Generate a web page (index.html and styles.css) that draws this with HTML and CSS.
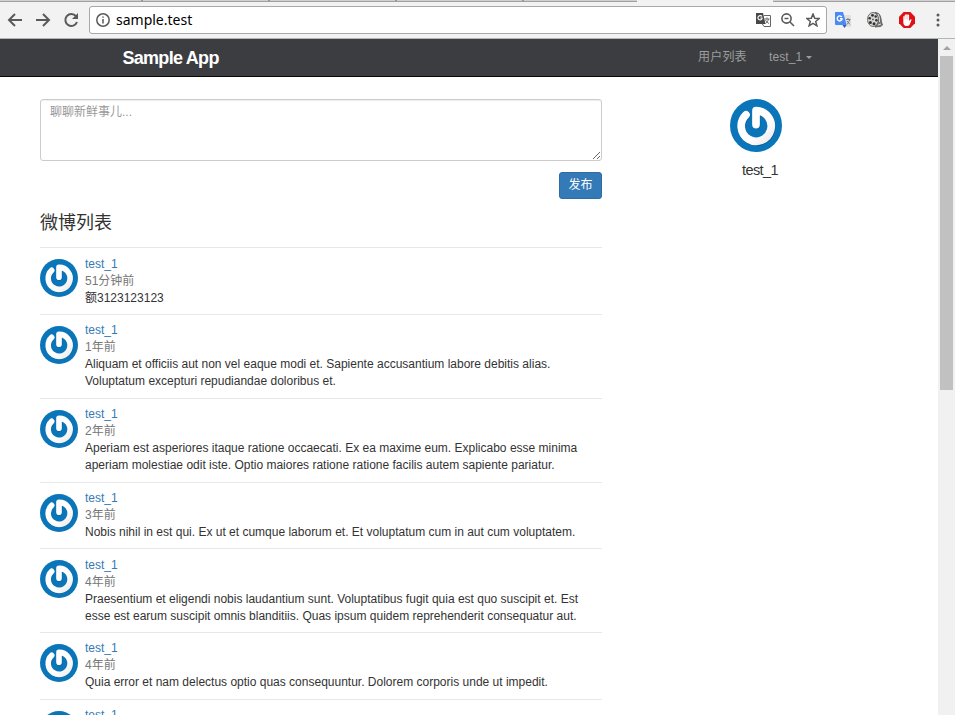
FILE: index.html
```html
<!DOCTYPE html>
<html lang="zh">
<head>
<meta charset="utf-8">
<title>Sample App</title>
<link rel="stylesheet" href="styles.css">
</head>
<body>
<svg class="defs" aria-hidden="true">
  <defs>
    <linearGradient id="shade" x1="0" y1="0" x2="1" y2="1">
      <stop offset=".6" stop-color="#fff"/><stop offset="1" stop-color="#ececec"/>
    </linearGradient>
    <symbol id="avatar" viewBox="0 0 52 52" preserveAspectRatio="none">
      <circle cx="26" cy="26" r="26" fill="#0a76b9"/>
      <path d="M16 15.500A15 15 0 1 0 26 11.500V25" transform="translate(.5 .7)" fill="none" stroke="#075582" stroke-opacity=".45" stroke-width="8" stroke-linecap="round" stroke-linejoin="round"/>
      <path d="M16 15.500A15 15 0 1 0 26 11.500V25" fill="none" stroke="url(#shade)" stroke-width="7.700" stroke-linecap="round" stroke-linejoin="round"/>
    </symbol>
  </defs>
</svg>
<header class="browser">
  <div class="tabs"><i class="tab-edge"></i><i class="tab-edge"></i><i class="tab-edge"></i><i class="tab-edge"></i><i class="tab-active"></i><i class="tab-rest"></i></div>
  <div class="toolbar">
    <svg class="nav-icon back" viewBox="0 0 16 16"><path d="M15 8H2M8 2L2 8l6 6"/></svg>
    <svg class="nav-icon forward" viewBox="0 0 16 16"><path d="M1 8h13M8 2l6 6-6 6"/></svg>
    <svg class="nav-icon reload" viewBox="0 0 16 16"><path d="M13 4.2A6 6 0 1 0 14 10"/><path class="solid" d="M15 1v6H9z"/></svg>
    <div class="address">
      <svg class="info" viewBox="0 0 14 14"><circle cx="7" cy="7" r="6.2"/><path d="M7 6v4.500M7 3.400v1.400"/></svg>
      <span class="url">sample.test</span>
      <svg class="translate-page" viewBox="0 0 15 14"><path fill="#484848" d="M0 0h7l2.500 11H0z"/><path fill="none" stroke="#666" d="M8 2.500h6.500v11H8l-2-3"/><path fill="none" stroke="#fff" stroke-width="1.200" d="M6 3.500A2.200 2.200 0 1 0 6 6V5H4.300"/><path fill="none" stroke="#666" d="M8.500 6h5M11 4.500V6M12.500 6c-.5 2-2 4-3 4.500M9.500 7c1 2 2.500 3 3.500 3.500"/></svg>
      <svg class="zoom-out" viewBox="0 0 14 14"><circle cx="5.500" cy="5.500" r="4.600"/><path d="M9 9l4 4M3.500 5.500h4"/></svg>
      <svg class="star" viewBox="0 0 14 14"><path d="M7 1l1.700 4.200 4.500.3-3.500 2.900 1.200 4.400L7 10.400l-3.900 2.400 1.200-4.400L.8 5.500l4.500-.3z"/></svg>
    </div>
    <svg class="ext translate-ext" viewBox="0 0 16 16"><path fill="#dfe0e1" d="M7 3h9v12H9z"/><path fill="#4a8af4" d="M0 0h8l3.700 13H1a1 1 0 0 1-1-1z"/><path fill="#3159b9" d="M7.500 13h4L9.500 16z"/><path fill="none" stroke="#fff" stroke-width="1.400" d="M6.800 5A2.500 2.500 0 1 0 7 7.500V6.800H5"/><path fill="none" stroke="#777c80" d="M11 7.500h4.500M13 6v1.500M14.500 8c-.5 2-1.500 3.500-2.700 4.500M12 9l3 3.500"/></svg>
    <svg class="ext reel" viewBox="0 0 16 16"><path fill="#777" stroke="#444" stroke-width=".7" d="M8 .5q5 0 6 6 .3 4 1.500 6.500l-2 1.500L8 15z"/><ellipse cx="6" cy="7.500" rx="5.500" ry="7" fill="#d4d4d2" stroke="#555" stroke-width=".8"/><g fill="#333"><circle cx="5.500" cy="3.300" r="1.400"/><circle cx="2.700" cy="6.300" r="1.300"/><circle cx="3.400" cy="10.500" r="1.500"/><circle cx="7" cy="11.800" r="1.500"/><circle cx="9.400" cy="8.300" r="1.300"/><circle cx="8.700" cy="4.500" r="1.200"/><circle cx="5.900" cy="7.500" r=".8"/></g><path fill="none" stroke="#ddd" d="M11 2q2 3 1.500 8M11 13l3-1"/></svg>
    <svg class="ext blocker" viewBox="0 0 16 16"><path fill="#df1115" d="M4.700 0h6.600L16 4.700v6.600L11.300 16H4.700L0 11.300V4.700z"/><path fill="#fff" d="M4.300 8V4.500q.6-.8 1.400 0V3q.7-.9 1.500-.2.700-1.200 1.500 0 .8-.7 1.400.3V9l1.300-1.500q1-.4 1.200.3L10.700 12.500Q10 14 7.500 14 4.300 14 4.300 10z"/><path fill="none" stroke="#e98a8c" stroke-width=".4" d="M5.700 4.500V7.500M7.200 3V7.500M8.700 3V7.500"/></svg>
    <svg class="menu" viewBox="0 0 4 14"><circle cx="2" cy="2" r="1.500"/><circle cx="2" cy="7" r="1.500"/><circle cx="2" cy="12" r="1.500"/></svg>
  </div>
</header>
<div class="viewport">
  <div class="page">
    <nav class="navbar">
      <a class="logo">Sample App</a>
      <a class="users">用户列表</a>
      <a class="account">test_1<i class="caret"></i></a>
    </nav>
    <div class="columns">
      <main>
        <textarea placeholder="聊聊新鲜事儿..."></textarea>
        <div class="actions"><button>发布</button></div>
        <h3>微博列表</h3>
        <ol class="statuses">
          <li class="low"><svg class="avatar"><use href="#avatar"/></svg><div><a>test_1</a><time>51分钟前</time><p>额3123123123</p></div></li>
          <li class="tall"><svg class="avatar"><use href="#avatar"/></svg><div><a>test_1</a><time>1年前</time><p>Aliquam et officiis aut non vel eaque modi et. Sapiente accusantium labore debitis alias.<br>Voluptatum excepturi repudiandae doloribus et.</p></div></li>
          <li class="tall"><svg class="avatar"><use href="#avatar"/></svg><div><a>test_1</a><time>2年前</time><p>Aperiam est asperiores itaque ratione occaecati. Ex ea maxime eum. Explicabo esse minima<br>aperiam molestiae odit iste. Optio maiores ratione ratione facilis autem sapiente pariatur.</p></div></li>
          <li><svg class="avatar"><use href="#avatar"/></svg><div><a>test_1</a><time>3年前</time><p>Nobis nihil in est qui. Ex ut et cumque laborum et. Et voluptatum cum in aut cum voluptatem.</p></div></li>
          <li class="tall low"><svg class="avatar"><use href="#avatar"/></svg><div><a>test_1</a><time>4年前</time><p>Praesentium et eligendi nobis laudantium sunt. Voluptatibus fugit quia est quo suscipit et. Est<br>esse est earum suscipit omnis blanditiis. Quas ipsum quidem reprehenderit consequatur aut.</p></div></li>
          <li><svg class="avatar"><use href="#avatar"/></svg><div><a>test_1</a><time>4年前</time><p>Quia error et nam delectus optio quas consequuntur. Dolorem corporis unde ut impedit.</p></div></li>
          <li><svg class="avatar"><use href="#avatar"/></svg><div><a>test_1</a></div></li>
        </ol>
      </main>
      <aside>
        <svg class="avatar-large"><use href="#avatar"/></svg>
        <h1>test_1</h1>
      </aside>
    </div>
  </div>
  <div class="scrollbar"><i class="arrow"></i><i class="thumb"></i></div>
</div>
</body>
</html>
```

FILE: styles.css
```css
* { box-sizing: border-box; }
body { margin: 0; height: 715px; overflow: hidden; display: flex; flex-direction: column; background: #fff; color: #333; font: 12px/17px "Liberation Sans", "Noto Sans CJK SC", sans-serif; }
.defs { position: absolute; width: 0; height: 0; }
svg { flex: none; display: block; }

.browser { flex: none; height: 39px; background: #f2f2f2; border-bottom: 1px solid #b4b4b4; }
.tabs { display: flex; height: 2px; }
.tabs i { height: 2px; background: #d0d0d0; border-bottom: 1px solid #a0a0a0; }
.tab-edge { width: 127px; border-right: 2px solid #999; }
.tabs .tab-edge:first-child { width: 143px; }
.tabs .tab-active { width: 113px; }
.tabs .tab-rest { flex: 1; margin-left: 136px; }
.toolbar { display: flex; align-items: center; height: 36px; }
.nav-icon { width: 16px; height: 16px; fill: none; stroke: #5a5a5a; stroke-width: 2; }
.nav-icon .solid { fill: #5a5a5a; stroke: none; }
.back { margin-left: 7px; }
.forward { margin-left: 12px; }
.reload { margin-left: 12px; }
.address { display: flex; align-items: center; margin-left: 10px; width: 738px; height: 28px; border: 1px solid #a8a8a8; border-radius: 3px; background: #fff; }
.info { width: 14px; height: 14px; margin-left: 6px; fill: none; stroke: #5a5a5a; stroke-width: 1.5; }
.url { flex: 1; margin-left: 6px; color: #000; font: 14px/20px "Noto Sans", sans-serif; }
.translate-page { width: 15px; height: 14px; }
.zoom-out { width: 14px; height: 14px; margin-left: 10px; fill: none; stroke: #5a5a5a; stroke-width: 1.6; }
.star { width: 14px; height: 14px; margin: 0 6px 0 11px; fill: none; stroke: #5a5a5a; stroke-width: 1.5; }
.ext { width: 16px; height: 16px; }
.translate-ext { margin-left: 8px; }
.reel, .blocker { margin-left: 16px; }
.menu { width: 4px; height: 14px; margin-left: 21px; fill: #5a5a5a; }

.viewport { flex: 1; min-height: 0; display: flex; }
.page { width: 938px; overflow: hidden; }
.navbar { display: flex; align-items: center; height: 38px; padding-left: 122.5px; background: #3c3d41; border-bottom: 1px solid #080808; color: #9d9d9d; }
.logo { width: 575.5px; padding-top: 2px; color: #fff; font-size: 18px; font-weight: bold; letter-spacing: -.72px; }
.users { width: 71px; letter-spacing: .2px; }
.account { display: flex; align-items: center; letter-spacing: .1px; }
.caret { margin-left: 4px; border: 3px solid transparent; border-top-color: #9d9d9d; border-bottom: 0; }
.columns { display: flex; padding: 22px 0 0 40px; }
main { width: 562px; }
textarea { display: block; width: 562px; height: 62px; padding: 4px 9px; border: 1px solid #ccc; border-radius: 3px; box-shadow: inset 0 1px 1px rgba(0,0,0,.075); font: inherit; resize: vertical; }
textarea::placeholder { color: #999; }
.actions { display: flex; justify-content: flex-end; margin-top: 11px; }
button { width: 43px; height: 27px; padding: 0; border: 1px solid #2e6da4; border-radius: 3px; background: #337ab7; color: #fff; font: inherit; }
h3 { margin: 14px 0 14px; font-size: 18px; line-height: 20px; font-weight: normal; }
.statuses { margin: 0; padding: 0; list-style: none; }
.statuses li { display: flex; height: 66.667px; padding-top: 7px; border-top: 1px solid #e8e8e8; }
.statuses .tall { height: 84px; }
.statuses .low { padding-top: 8px; }
.avatar { width: 38px; height: 38px; margin: 4px 7px 0 0; }
.low .avatar { margin-top: 3px; }
.statuses a, time, p { display: block; margin: 0; white-space: nowrap; }
.statuses a { color: #337ab7; }
time { color: #777; }
aside { width: 52px; margin-left: 128px; }
.avatar-large { width: 52px; height: 53px; }
h1 { margin: 9px 0 0 12px; font-size: 14.5px; line-height: 18px; font-weight: normal; letter-spacing: -.6px; }
.scrollbar { width: 17px; background: #f1f1f1; display: flex; flex-direction: column; align-items: center; }
.arrow { margin-top: 7px; border: 4px solid transparent; border-bottom-color: #a3a3a3; border-top: 0; }
.thumb { width: 13px; height: 334px; margin-top: 6px; background: #c1c1c1; }
```
